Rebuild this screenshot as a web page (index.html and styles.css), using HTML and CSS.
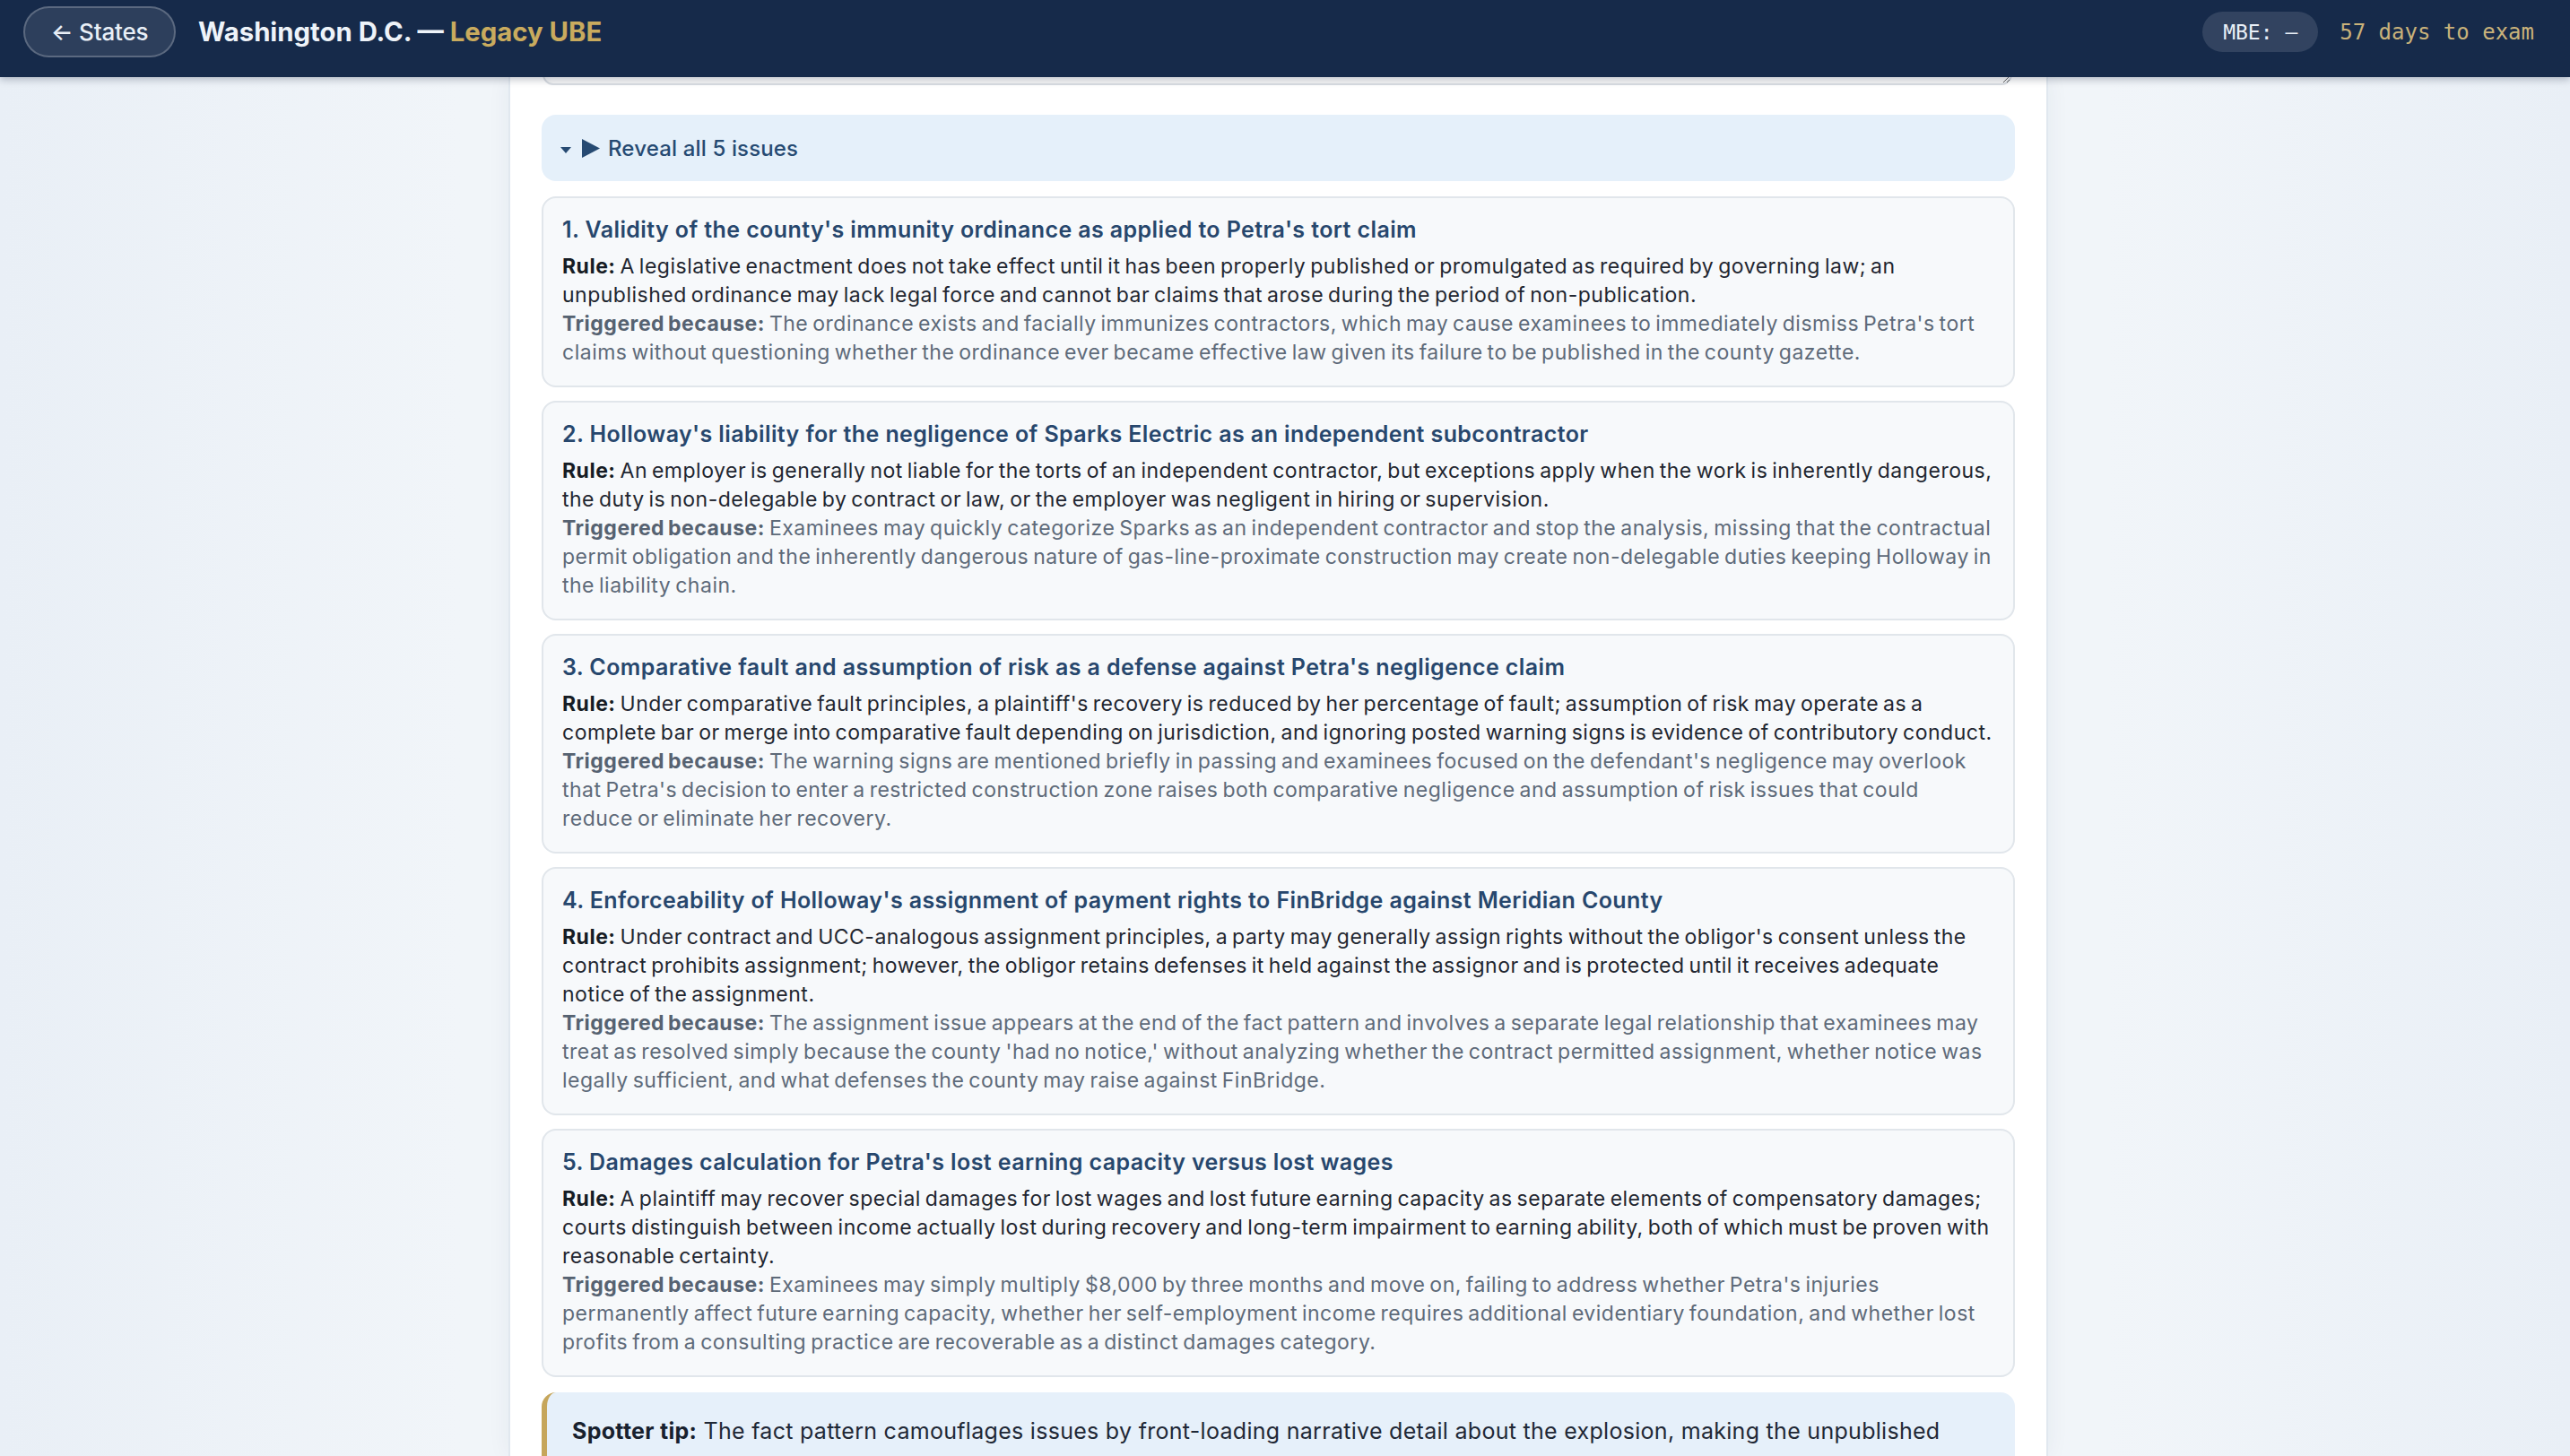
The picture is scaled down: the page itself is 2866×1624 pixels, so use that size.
FILE: index.html
```html
<!DOCTYPE html>
<html lang="en">
<head>
<meta charset="utf-8">
<title>Washington D.C. — Legacy UBE</title>
<link rel="stylesheet" href="styles.css">
</head>
<body>
<div class="app">
  <header class="topbar">
    <div class="topbar-left">
      <button class="back-btn">← States</button>
      <h1 class="page-title">Washington D.C. — <span class="gold">Legacy UBE</span></h1>
    </div>
    <div class="topbar-right">
      <span class="mbe-pill">MBE: —</span>
      <span class="countdown">57 days to exam</span>
    </div>
  </header>
  <div class="viewport">
    <main class="panel">
      <div class="scrolled">
        <textarea class="answer" aria-label="Your issue list"></textarea>

        <details class="reveal" open>
          <summary class="reveal-summary">
            <svg class="caret" width="12" height="7" viewBox="0 0 12 7"><path d="M0 0 H12 L6 7 Z" fill="#264a72"/></svg>
            <svg class="play" width="20" height="21" viewBox="0 0 20 21"><path d="M0 0 L20 10.5 L0 21 Z" fill="#264a72"/></svg>
            <span>Reveal all 5 issues</span>
          </summary>
          <div class="issues">
            <article class="issue">
              <h3 class="issue-title">1. Validity of the county's immunity ordinance as applied to Petra's tort claim</h3>
              <p class="rule"><b>Rule:</b> A legislative enactment does not take effect until it has been properly published or promulgated as required by governing law; an unpublished ordinance may lack legal force and cannot bar claims that arose during the period of non-publication.</p>
              <p class="trigger"><b>Triggered because:</b> The ordinance exists and facially immunizes contractors, which may cause examinees to immediately dismiss Petra's tort claims without questioning whether the ordinance ever became effective law given its failure to be published in the county gazette.</p>
            </article>
            <article class="issue">
              <h3 class="issue-title">2. Holloway's liability for the negligence of Sparks Electric as an independent subcontractor</h3>
              <p class="rule"><b>Rule:</b> An employer is generally not liable for the torts of an independent contractor, but exceptions apply when the work is inherently dangerous, the duty is non-delegable by contract or law, or the employer was negligent in hiring or supervision.</p>
              <p class="trigger"><b>Triggered because:</b> Examinees may quickly categorize Sparks as an independent contractor and stop the analysis, missing that the contractual permit obligation and the inherently dangerous nature of gas-line-proximate construction may create non-delegable duties keeping Holloway in the liability chain.</p>
            </article>
            <article class="issue">
              <h3 class="issue-title">3. Comparative fault and assumption of risk as a defense against Petra's negligence claim</h3>
              <p class="rule"><b>Rule:</b> Under comparative fault principles, a plaintiff's recovery is reduced by her percentage of fault; assumption of risk may operate as a complete bar or merge into comparative fault depending on jurisdiction, and ignoring posted warning signs is evidence of contributory conduct.</p>
              <p class="trigger"><b>Triggered because:</b> The warning signs are mentioned briefly in passing and examinees focused on the defendant's negligence may overlook that Petra's decision to enter a restricted construction zone raises both comparative negligence and assumption of risk issues that could reduce or eliminate her recovery.</p>
            </article>
            <article class="issue">
              <h3 class="issue-title">4. Enforceability of Holloway's assignment of payment rights to FinBridge against Meridian County</h3>
              <p class="rule"><b>Rule:</b> Under contract and UCC-analogous assignment principles, a party may generally assign rights without the obligor's consent unless the contract prohibits assignment; however, the obligor retains defenses it held against the assignor and is protected until it receives adequate notice of the assignment.</p>
              <p class="trigger"><b>Triggered because:</b> The assignment issue appears at the end of the fact pattern and involves a separate legal relationship that examinees may treat as resolved simply because the county 'had no notice,' without analyzing whether the contract permitted assignment, whether notice was legally sufficient, and what defenses the county may raise against FinBridge.</p>
            </article>
            <article class="issue">
              <h3 class="issue-title">5. Damages calculation for Petra's lost earning capacity versus lost wages</h3>
              <p class="rule"><b>Rule:</b> A plaintiff may recover special damages for lost wages and lost future earning capacity as separate elements of compensatory damages; courts distinguish between income actually lost during recovery and long-term impairment to earning ability, both of which must be proven with reasonable certainty.</p>
              <p class="trigger"><b>Triggered because:</b> Examinees may simply multiply $8,000 by three months and move on, failing to address whether Petra's injuries permanently affect future earning capacity, whether her self-employment income requires additional evidentiary foundation, and whether lost profits from a consulting practice are recoverable as a distinct damages category.</p>
            </article>
          </div>
        </details>

        <div class="tip">
          <p><b>Spotter tip:</b> The fact pattern camouflages issues by front-loading narrative detail about the explosion, making the unpublished ordinance and the late-mentioned assignment easy to overlook.</p>
        </div>
      </div>
    </main>
  </div>
</div>
</body>
</html>
```
FILE: styles.css
```css
* { box-sizing: border-box; }
html, body { margin: 0; height: 100%; }
body {
  font-family: "Inter", "Noto Sans", sans-serif;
  background: linear-gradient(90deg, #e9eff6 0%, #f1f5f9 18%, #f1f5f9 82%, #e9eff6 100%);
  color: #1f2630;
  overflow: hidden;
}
.app { display: flex; flex-direction: column; height: 100vh; }

/* top bar */
.topbar {
  position: relative;
  z-index: 2;
  flex: 0 0 86px;
  display: flex;
  justify-content: space-between;
  align-items: flex-start;
  padding: 7px 40px 0 26px;
  background: #162a4a;
  box-shadow: 0 3px 8px rgba(10, 25, 50, 0.25);
}
.topbar-left { display: flex; align-items: center; gap: 25px; }
.back-btn {
  height: 57px;
  width: 170px;
  border-radius: 29px;
  border: 2px solid rgba(255, 255, 255, 0.22);
  background: rgba(255, 255, 255, 0.1);
  color: #e9eff7;
  font-family: "Inter", sans-serif;
  font-size: 26px;
  font-weight: 500;
  letter-spacing: -0.2px;
  padding: 0;
}
.page-title {
  margin: 0;
  font-size: 29.3px;
  font-weight: 700;
  color: #eef3f9;
}
.gold { color: #c9ab5e; }
.topbar-right { display: flex; align-items: center; gap: 24px; padding-top: 6px; }
.mbe-pill {
  display: inline-flex;
  align-items: center;
  height: 45px;
  padding: 0 23px;
  border-radius: 23px;
  background: rgba(255, 255, 255, 0.12);
  color: #e9eff7;
  font-family: "DejaVu Sans Mono", monospace;
  font-size: 23px;
}
.countdown {
  font-family: "DejaVu Sans Mono", monospace;
  font-size: 24px;
  color: #c9b27a;
}

/* page area */
.viewport { flex: 1; overflow: hidden; display: flex; justify-content: center; }
.panel {
  width: 1717px;
  margin-left: -15px;
  background: #fff;
  border-left: 2px solid #e1e8ef;
  border-right: 2px solid #e1e8ef;
  box-shadow: 0 0 24px rgba(30, 55, 90, 0.06);
  padding: 0 35px;
}
/* simulated scroll position: the top of the panel sits above the viewport */
.scrolled { margin-top: -231px; display: flex; flex-direction: column; }

.answer {
  display: block;
  width: calc(100% - 4px);
  height: 240px;
  margin: 0 0 33px 1px;
  border: 2px solid #d9dde2;
  border-radius: 12px;
  background: #fff;
  box-shadow: inset 0 -3px 4px rgba(0, 0, 0, 0.04);
  resize: vertical;
}

.reveal { margin: 0; }
.reveal-summary {
  list-style: none;
  display: flex;
  align-items: center;
  height: 74px;
  padding: 0 21px;
  border-radius: 16px;
  background: #e5f0fa;
  color: #264a72;
  font-size: 24px;
  font-weight: 500;
  letter-spacing: 0.15px;
  cursor: pointer;
}
.reveal-summary::-webkit-details-marker { display: none; }
.caret { margin: 4px 12px 0 0; }
.play { margin-right: 9px; }

.issues { display: flex; flex-direction: column; gap: 15px; margin-top: 17px; }
.issue {
  background: #f7f9fb;
  border: 2px solid #e1e6eb;
  border-radius: 16px;
  padding: 17px 16px 21px 21px;
}
.issue-title {
  margin: 0 0 7px;
  font-size: 25px;
  line-height: 36px;
  font-weight: 600;
  letter-spacing: 0.4px;
  color: #27476d;
}
.issue p {
  margin: 0;
  max-width: 1595.7px;
  font-size: 23px;
  line-height: 32px;
  letter-spacing: 0.5px;
  word-spacing: -2px;
}
.rule { color: #1f2630; }
.rule b { color: #161c24; font-weight: 700; }
.trigger { color: #5e6a79; }
.trigger b { color: #566271; font-weight: 700; }

.tip {
  margin-top: 17px;
  background: #e6f0fa;
  border-left: 6px solid #c6a65b;
  border-radius: 16px;
  padding: 24px 28px;
}
.tip p { margin: 0; font-size: 25px; line-height: 38px; color: #1f2836; letter-spacing: 0.29px; }
.tip b { color: #18212e; font-weight: 700; }
```
